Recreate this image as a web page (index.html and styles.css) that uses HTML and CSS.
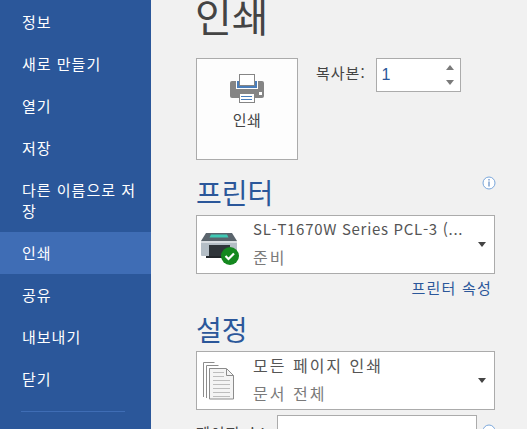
FILE: index.html
```html
<!DOCTYPE html>
<html lang="ko">
<head>
    <meta charset="UTF-8" />
    <title>인쇄</title>
    <link rel="stylesheet" href="styles.css">
</head>
<body>
    <div class="sidebar">
        <a class="nav-item">정보</a>
        <a class="nav-item">새로 만들기</a>
        <a class="nav-item">열기</a>
        <a class="nav-item">저장</a>
        <a class="nav-item nav-tall">다른 이름으로 저장</a>
        <a class="nav-item active">인쇄</a>
        <a class="nav-item">공유</a>
        <a class="nav-item">내보내기</a>
        <a class="nav-item">닫기</a>
        <div class="nav-divider"></div>
    </div>

    <div class="main">
        <h1>인쇄</h1>

        <div class="print-row">
            <button class="print-button">
                <svg width="36" height="31" viewBox="0 0 36 31">
                    <path d="M3 8h30a2 2 0 0 1 2 2v13a2 2 0 0 1-2 2H3a2 2 0 0 1-2-2V10a2 2 0 0 1 2-2z" fill="#858585"/>
                    <rect x="7" y="8" width="22" height="8" fill="#fff"/>
                    <rect x="8" y="8" width="20" height="7" fill="#4a7ebb"/>
                    <rect x="10.500" y="1.500" width="15" height="11" fill="#fff" stroke="#858585"/>
                    <rect x="10.500" y="20.500" width="15" height="9" fill="#fff" stroke="#858585"/>
                    <rect x="12" y="23" width="11" height="1" fill="#4a7ebb"/>
                    <rect x="12" y="26" width="11" height="1" fill="#4a7ebb"/>
                    <rect x="30" y="19" width="3" height="3" fill="#fff"/>
                </svg>
                <span>인쇄</span>
            </button>
            <div class="copies">
                <label>복사본:</label>
                <div class="spin-input">
                    <span>1</span>
                    <div class="spin-arrows">
                        <i class="arrow-up"></i>
                        <i class="arrow-down"></i>
                    </div>
                </div>
            </div>
        </div>

        <div class="section-head">
            <h2>프린터</h2>
            <svg class="info-icon" width="14" height="14" viewBox="0 0 14 14">
                <circle cx="7" cy="7" r="6" fill="#fff" stroke="#7aa7dc"/>
                <rect x="6.500" y="3" width="1" height="1.500" fill="#3f72b5"/>
                <rect x="6.500" y="5.500" width="1" height="5" fill="#3f72b5"/>
            </svg>
        </div>

        <div class="dropdown">
            <div class="dropdown-icon printer-icon">
                <svg width="48" height="33" viewBox="0 0 48 33">
                    <path d="M0 8l5-8h26l5 8z" fill="#5a646c"/>
                    <path d="M10 1.500h16l1.500 3h-19z" fill="#3fc9b4"/>
                    <path d="M0 8h36v14a1 1 0 0 1-1 1H1a1 1 0 0 1-1-1z" fill="#b4bec6"/>
                    <rect x="0" y="8" width="36" height="2" fill="#d8dde1"/>
                    <rect x="8" y="12" width="21" height="11" fill="#2f353a"/>
                    <rect x="5" y="23" width="25" height="2" fill="#23272b"/>
                    <circle cx="29" cy="23" r="9" fill="#14881f"/>
                    <path d="M24.500 23l3 3 5.500-5.500" fill="none" stroke="#fff" stroke-width="2.200"/>
                </svg>
            </div>
            <div class="dropdown-text">
                <div class="dropdown-title latin-title">SL-T1670W Series PCL-3 (...</div>
                <div class="dropdown-sub">준비</div>
            </div>
            <i class="caret"></i>
        </div>

        <a class="printer-link">프린터 속성</a>

        <h2 class="settings-head">설정</h2>

        <div class="dropdown">
            <div class="dropdown-icon">
                <svg width="31" height="38" viewBox="0 0 31 38">
                    <path d="M.5 35V.5h11M3.500 36V3.500h12M6.500 37V6.500h15" fill="none" stroke="#8c8c8c"/>
                    <path d="M6.500 37V6.500h17l7 7v23.500z" fill="#f4f4f4" stroke="#8c8c8c"/>
                    <path d="M23.500 7v6.500h7" fill="none" stroke="#8c8c8c"/>
                    <path d="M10 10.500h11M10 14.500h11M10 18.500h17M10 22.500h17M10 26.500h17M10 30.500h17M10 34.500h17" stroke="#bdbdbd"/>
                </svg>
            </div>
            <div class="dropdown-text">
                <div class="dropdown-title">모든 페이지 인쇄</div>
                <div class="dropdown-sub">문서 전체</div>
            </div>
            <i class="caret"></i>
        </div>

        <div class="pages-row">
            <label>페이지 수:</label>
            <div class="pages-input"></div>
            <svg class="info-icon" width="14" height="14" viewBox="0 0 14 14">
                <circle cx="7" cy="7" r="6" fill="#fff" stroke="#7aa7dc"/>
            </svg>
        </div>
    </div>
</body>
</html>
```

FILE: styles.css
```css
html, body {
    height: 100%;
}

body {
    margin: 0;
    display: flex;
    height: 429px;
    overflow: hidden;
    background: #f1f1f1;
    font-family: "Noto Sans CJK KR", "Noto Sans", sans-serif;
    color: #444;
}

.sidebar {
    width: 151px;
    flex-shrink: 0;
    padding-top: 1px;
    background: #2b579a;
    box-sizing: border-box;
}

.nav-item {
    display: block;
    padding: 10px 0 10px 22px;
    font-size: 15px;
    line-height: 22px;
    letter-spacing: 1px;
    color: #fff;
}

.nav-tall {
    padding-right: 8px;
    padding-bottom: 11px;
    line-height: 21px;
}

.active {
    background: #3f6db5;
}

.nav-divider {
    height: 1px;
    margin: 11px 26px 0 21px;
    background: #3f6db5;
}

.main {
    width: 300px;
    margin-left: 45px;
}

h1 {
    height: 58px;
    margin: 0 0 0 -1px;
    font-size: 40px;
    font-weight: 400;
    line-height: 30px;
    color: #444;
}

.print-row {
    display: flex;
}

.print-button {
    display: flex;
    flex-direction: column;
    align-items: center;
    width: 102px;
    height: 102px;
    padding: 14px 0 0;
    border: 1px solid #ababab;
    background: #fdfdfd;
    font-family: inherit;
    font-size: 15px;
    letter-spacing: 0.5px;
    color: #444;
}

.print-button span {
    margin-top: 6px;
    line-height: 20px;
}

.copies {
    display: flex;
    gap: 10px;
    margin-left: 18px;
    font-size: 15px;
    letter-spacing: 1px;
}

.copies label {
    line-height: 30px;
}

.spin-input {
    display: flex;
    justify-content: space-between;
    align-items: center;
    width: 85px;
    height: 34px;
    padding: 0 6px 0 5px;
    border: 1px solid #ababab;
    background: #fff;
    box-sizing: border-box;
    font-family: "Liberation Sans", sans-serif;
    font-size: 16px;
    color: #2b579a;
}

.spin-arrows {
    display: flex;
    flex-direction: column;
    gap: 10px;
}

.arrow-up,
.arrow-down {
    width: 0;
    border-left: 4px solid transparent;
    border-right: 4px solid transparent;
}

.arrow-up {
    border-bottom: 5px solid #7a7a7a;
}

.arrow-down {
    border-top: 5px solid #7a7a7a;
}

.section-head {
    display: flex;
    justify-content: space-between;
    align-items: flex-start;
    width: 300px;
    margin-top: 10px;
}

h2 {
    margin: 0;
    font-size: 28px;
    font-weight: 400;
    line-height: 45px;
    color: #2b579a;
}

.info-icon {
    margin-top: 6px;
    flex-shrink: 0;
}

.dropdown {
    display: flex;
    align-items: center;
    width: 299px;
    height: 59px;
    border: 1px solid #ababab;
    background: #fff;
    box-sizing: border-box;
}

.dropdown-icon {
    width: 50px;
    padding-left: 6px;
    flex-shrink: 0;
    line-height: 0;
}

.printer-icon {
    margin-top: 9px;
    padding-left: 4px;
    width: 52px;
}

.dropdown-title {
    font-size: 16px;
    line-height: 28px;
    letter-spacing: 2px;
    color: #555;
}

.latin-title {
    font-size: 15px;
    letter-spacing: 0.7px;
}

.dropdown-sub {
    font-size: 16px;
    line-height: 28px;
    letter-spacing: 2px;
    color: #7a7a7a;
}

.dropdown-text {
    flex-grow: 1;
    padding-bottom: 3px;
    white-space: nowrap;
}

.caret {
    width: 0;
    margin-right: 8px;
    border-left: 4.500px solid transparent;
    border-right: 4.500px solid transparent;
    border-top: 5px solid #444;
}

.printer-link {
    display: block;
    width: 296px;
    font-size: 15px;
    line-height: 28px;
    letter-spacing: 1.2px;
    text-align: right;
    color: #2b579a;
}

.settings-head {
    margin-top: 5px;
    line-height: 44px;
}

.pages-row {
    display: flex;
    gap: 5px;
    margin-top: 5px;
    font-size: 15px;
    letter-spacing: 1px;
}

.pages-row label {
    width: 76px;
    flex-shrink: 0;
    padding-top: 6px;
    line-height: 24px;
    white-space: nowrap;
}

.pages-row .info-icon {
    margin-top: 9px;
}

.pages-input {
    width: 198px;
    height: 30px;
    flex-shrink: 0;
    border: 1px solid #ababab;
    background: #fff;
}
```
